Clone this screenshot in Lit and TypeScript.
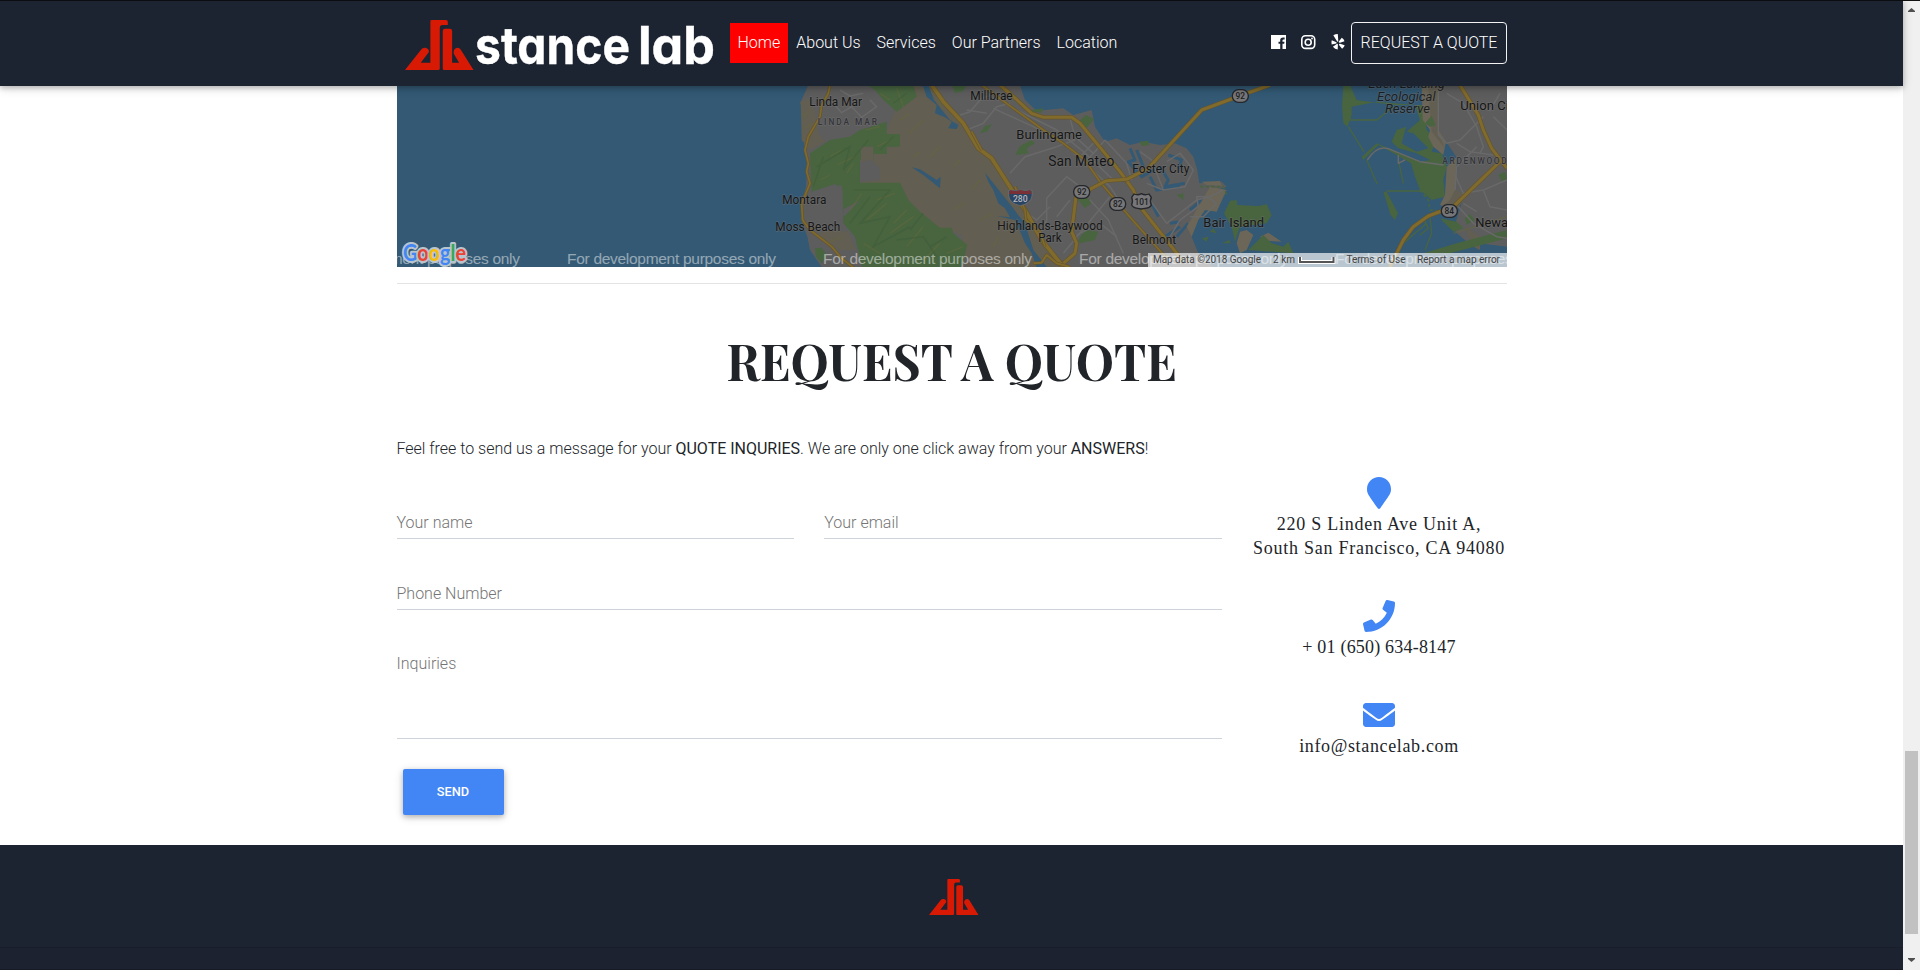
import { LitElement, html, css, svg } from "lit";
import { customElement, property } from "lit/decorators.js";

@customElement("brand-mark")
class BrandMark extends LitElement {
  static styles = css`
    :host { display: block; }
    svg { display: block; width: 100%; height: 100%; }
  `;
  render() {
    return html`<svg viewBox="0 0 205 150" preserveAspectRatio="none" fill="#d81a05">
      <path d="M0 150L48 89Q53 82 61 83Q74 86 71 97L47 128H76V4Q76 0 80 0H123Q128 0 128 5V15H110Q104 16 104 24V146Q104 150 99 150Z"/>
      <path d="M113 33Q113 26 120 26H134Q141 26 141 33V128H162L146 101Q144 87 154 84Q162 82 167 89L205 150H117Q113 150 113 146Z"/>
    </svg>`;
  }
}

@customElement("area-map")
class AreaMap extends LitElement {
  static styles = css`
    :host { display: block; height: 181px; }
    svg { display: block; width: 1110px; height: 181px; font-family: Roboto, "Open Sans", sans-serif; font-weight: 400; }
    .water { fill: #335974; }
    .land { fill: #5d5d5d; }
    .hill { fill: #625e51; }
    .green { fill: #486540; }
    .sand { fill: #6b6657; }
    .casing { fill: none; stroke: #65552d; stroke-linejoin: round; }
    .road { fill: none; stroke: #806a2c; stroke-linejoin: round; }
    .street { fill: none; stroke: #69696a; stroke-width: 4.500; stroke-linejoin: round; }
    .inlet { fill: none; stroke: #335974; stroke-linejoin: round; }
    .marsh { fill: none; stroke: #486540; }
    .hatch { fill: none; stroke: #66673c; stroke-width: 4; opacity: .55; }
    .shade { fill: none; stroke: #3e5b38; stroke-width: 5; opacity: .45; }
    .label { fill: #161616; stroke: #747474; stroke-width: 4; paint-order: stroke; stroke-opacity: .5; }
    .area { fill: #34353b; font-weight: 500; }
    .shield { fill: #77777a; stroke: #25272c; stroke-width: 4; }
    .num { fill: #1d1e20; font-size: 25px; text-anchor: middle; font-weight: 500; }
    .mark { fill: #fff; opacity: .47; font-family: "Liberation Sans", sans-serif; }
    .bar { fill: #fff; opacity: .66; }
    .legal { fill: #444; }
    .google { font-family: Lato, sans-serif; font-weight: 700; }
  `;
  label(x: number, y: number, w: number, t: string, size = 38) {
    return svg`<text class="label" x=${x} y=${y} font-size=${size} textLength=${w} lengthAdjust="spacingAndGlyphs">${t}</text>`;
  }
  way(d: string, w = 11) {
    return svg`<path class="casing" stroke-width=${w + 4} d=${d}/><path class="road" stroke-width=${w} d=${d}/>`;
  }
  shield(x: number, y: number, t: string) {
    return svg`<rect class="shield" x=${x - 24} y=${y - 19} width="48" height="38" rx="18"/><text class="num" x=${x} y=${y + 9}>${t}</text>`;
  }
  render() {
    const streets = [
      "M150 60L185 98L215 80L245 112L290 80L270 60", "M180 30L210 48L250 40",
      "M540 105L570 95L605 55L650 40", "M560 150L610 130L650 80L690 70", "M640 85L760 140L850 190L990 320L1070 440",
      "M680 75L830 150L910 215L1000 300", "M870 115L885 170L940 220L975 180", "M690 280L735 230L830 200L885 180",
      "M975 180L1040 250L1055 300", "M800 355L860 290L900 320", "M800 355V420L780 460", "M850 520L990 350",
      "M830 410L870 360", "M930 360L985 420L1030 520", "M890 465L960 430L1010 470", "M740 400L770 420L810 380",
      "M560 90L620 100", "M900 230L945 185", "M915 245L960 200"
    ];
    const east = [
      "M925 30V165L950 190L990 180L1060 110", "M950 40L1000 70L1040 140L1060 200L1050 220", "M980 190L1020 215L1090 225",
      "M975 285L1000 340L1060 330L1131 300", "M1060 330L1080 380L1131 390", "M1000 370L1040 395", "M1090 110L1131 150",
      "M1040 200L980 260L975 330", "M1110 40L1080 90L1040 75", "M985 380L1030 430L1100 470L1131 475",
      "M30 215L65 240L100 330L165 320L190 270L150 220L110 245", "M60 360L110 430L200 360L240 350L280 330",
      "M100 330L50 310", "M120 470L150 420L205 380L200 350L230 350L260 370L220 410L180 410"
    ];
    return html`<svg viewBox="397 86 1110 181">
      <rect class="water" x="397" y="86" width="1110" height="181"/>
      <g transform="translate(780 80) scale(.33333)">
        <path class="land" d="M85 15L60 70L70 85V175L82 250L78 320L64 370L65 425L82 470L90 510L125 561H1300L1255 520L1235 470L1262 400L1310 330L1340 320L1325 305L1258 310L1252 270L1240 230L1220 205L1185 190L1140 195L1090 185L1050 195L1010 175L975 185L945 140L935 90L880 105L850 85L770 92L735 60L720 15Z"/>
        <path class="hill" d="M400 15H455L500 85L560 140L610 220L700 320L740 400L800 500L850 550L840 561H560L545 465L470 440L390 370L360 310H240V240L180 190L240 160L320 150L345 95Z"/>
        <path class="hill" d="M62 65L85 55L105 95L115 160L135 185L90 210L65 180ZM140 450L205 455L225 510L180 510L110 465Z"/>
        <path class="green" d="M262 15H400L410 50L350 95L310 60L285 30ZM90 220L150 180L210 170L240 150L320 125V162H360V200H320V222H280V240H240V308H360L385 360L420 395L480 443H515L520 460L562 495L545 561H245L225 470L190 430L185 315L95 335ZM515 15H560L548 35L525 38Z"/>
        <path class="hill" d="M243 200H280V240H243Z"/>
        <path class="land" d="M240 245L275 240L300 265V300L240 306ZM95 335L165 312L188 330V420L130 440L78 400ZM190 388L238 362L190 412Z"/>
        <path class="green" d="M600 160L615 138L636 133L620 155ZM706 225L720 198L755 180L765 190L740 205L745 220ZM740 92L790 85L785 98ZM895 125L918 105L942 118L920 143L900 140ZM890 355L920 350L935 368L915 385ZM895 480L915 450L955 455L945 480L900 490ZM105 505L125 503L140 525L125 550L108 530ZM1078 185L1105 182L1108 195L1085 198Z"/>
        <path class="water" d="M405 15H445L462 60L490 95L510 120L535 135L530 147L505 145L515 125L495 112L465 100L470 75L440 50L430 20ZM395 262L420 268L470 300L482 290L480 325L430 285ZM615 278L700 385L712 402L735 430L760 510L800 561H770L755 520L735 490L725 465L705 420L650 408L690 412L675 385L655 370L640 330L625 305Z"/>
        ${["M150 230L185 210M170 255L225 230M120 300L150 285M200 280L220 250M255 150L300 140M290 200L330 180M300 40L330 60M350 25L370 80", "M210 390L245 340M260 420L320 370M290 360L345 340M330 460L400 410M380 500L430 440M250 490L300 520M430 540L480 490M500 520L550 500M380 390L340 430", "M70 110L85 95M75 145L100 130M140 490L185 470M360 120L390 100M385 160L430 120M450 230L480 200M520 260L540 240M575 330L600 300M600 420L640 400M640 500L655 470M400 230L420 215M520 390L550 370M490 90L475 60"].map(d => svg`<path class="hatch" d=${d}/>`)}
        <path class="shade" d="M110 260L210 200L190 270L265 180M220 330L330 330L240 430L330 410L280 500L390 440M350 480L430 470L470 530M130 230L100 320M340 170L300 210M380 40L340 70M430 400L390 450M500 470L450 500M270 350L210 430"/>
        ${streets.map(d => svg`<path class="street" d=${d}/>`)}
        <path class="inlet" stroke-width="9" d="M1050 205L1065 240L1045 245L1085 290L1130 265M1070 210L1090 260M1165 225L1205 240L1195 265M1110 290L1130 330L1200 320M1140 260L1165 300L1155 320L1215 310M1170 430L1200 425M1155 470L1200 440M1230 390L1270 355M1190 470L1225 430M1115 370L1135 410"/>
      </g>
      <g transform="translate(1130 80) scale(.33333)">
        <path class="green" d="M640 15H660L680 60L790 75H880L890 150L918 180L905 215L935 220L950 260L940 300L945 350L905 360L870 330L855 290L843 250L800 225L745 195L700 240L695 230L740 190L800 215L870 245L900 240L860 220L805 205L785 185L800 150L828 140L815 190L860 215L895 205L850 160L830 155L870 120L855 75L740 65L665 80V105L652 140L640 130L636 78ZM760 335L770 335L804 400L795 420L782 405ZM282 400L300 362L320 360L322 375L385 378L410 373L425 405L410 430L330 440L315 485L305 440Z"/>
        <path class="sand" d="M875 15H920L925 120L950 175L940 225L910 200L895 170L900 150L878 120ZM950 260L980 230V330L1000 345L970 390L930 375L945 345ZM215 305L270 303L275 318L230 315ZM240 320L290 330L260 395L225 390L205 420L185 470L170 440L205 380ZM390 470L415 458L455 485L410 482ZM330 455L350 450L370 465L350 510L330 520L320 490Z"/>
        <path class="land" d="M915 15H1131V500L1010 485L970 450L1000 350L975 330L985 240L955 195L925 150Z"/>
        <path class="hill" d="M895 25L935 15L925 60V160L945 205L905 155ZM975 330L1010 345L980 390L935 380L960 360ZM1005 440L1050 470V510L1030 500Z"/>
        <path class="green" d="M885 130L905 107L917 135L900 140ZM1005 415L1020 402L1034 420L1010 435ZM140 345L160 340V360ZM240 455L250 445L260 460ZM215 475L235 470L230 485ZM275 490L300 480V490ZM355 510L400 465L425 490L460 500L475 485L490 520ZM1105 285L1125 275L1131 300L1115 303ZM930 415L980 425L1000 445L970 455ZM880 520L980 490L1131 450V475L960 520Z"/>
        <path class="marsh" stroke-width="4" d="M660 80V120H740L790 80M655 140L702 215M710 240L742 313M805 240L820 310M770 333H880M880 415L895 445L870 465M900 410L905 460L885 510M820 490L890 430"/>
        <path class="marsh" stroke-width="5" stroke-dasharray="10 7" d="M210 320H280L290 345M870 330L895 360L900 390L950 395"/>
        <path class="hatch" d="M970 460L1131 410"/>
        <path class="street" stroke-width="8" d="M712 240Q740 195 775 206L870 245L940 255M805 225V250L825 240"/>
        ${east.map(d => svg`<path class="street" d=${d}/>`)}
      </g>
      <g transform="translate(780 80) scale(.33333)">
        ${this.way("M150 15L145 40L125 75L120 110L85 170L75 210L85 250L80 275L90 310L65 370L68 420L90 450L155 500L185 535L230 570", 5)}
        ${this.way("M605 15L700 85L790 150L850 190L915 240L960 305L1040 400L1160 535", 5)}
        ${this.way("M660 15L695 45L755 100L790 112H875L900 130L950 190L1020 275L1060 330L1080 380L1135 450L1210 545", 9)}
        ${this.way("M455 15L490 65L550 130L595 205L635 235L680 305L735 390L785 480L850 561", 11)}
        ${this.way("M575 155L605 210M705 320L735 390L738 420L780 455L795 500", 5)}
        ${this.way("M850 550L885 520L890 490L875 455L888 350L935 325L980 302L1040 298L1105 265L1265 90L1400 40L1470 15", 9)}
        ${this.way("M760 550L785 548L800 525L830 550L870 561", 6)}
      </g>
      <g transform="translate(1130 80) scale(.33333)">
        ${this.way("M990 15L1045 105L1060 150L1085 205L1131 265", 9)}
        ${this.way("M1110 245L970 380L895 408L850 440L820 480L795 530L780 561", 9)}
      </g>
      <g transform="translate(780 80) scale(.33333)">
        ${this.label(88, 79, 158, "Linda Mar")}
        <text class="label area" x="113" y="134" font-size="25" textLength="178">LINDA MAR</text>
        ${this.label(571, 60, 127, "Millbrae")}
        ${this.label(709, 176, 197, "Burlingame")}
        ${this.label(805, 258, 198, "San Mateo", 42)}
        ${this.label(1057, 279, 171, "Foster City")}
        ${this.label(7, 372, 132, "Montara")}
        ${this.label(-14, 453, 195, "Moss Beach")}
        ${this.label(652, 449, 316, "Highlands-Baywood")}
        ${this.label(775, 485, 70, "Park")}
        ${this.label(1057, 491, 131, "Belmont")}
        ${this.label(1270, 440, 182, "Bair Island", 40)}
        <path fill="#2a4463" stroke="#777" stroke-width="2" d="M686 331H756V348Q752 371 721 377Q690 371 686 348Z"/>
        <path fill="#7b3035" d="M687 342L691 330L706 334L721 330L736 334L751 330L755 342Z"/>
        <text x="721" y="366" fill="#b5b7bb" font-size="26" font-weight="500" text-anchor="middle">280</text>
        ${this.shield(905, 336, "92")}
        ${this.shield(1013, 372, "82")}
        <path class="shield" d="M1062 342Q1073 347 1084 341Q1095 347 1107 342L1114 352Q1108 364 1114 376Q1107 385 1095 385L1084 387L1073 385Q1057 383 1055 374Q1060 364 1055 352Z"/>
        <text class="num" x="1085" y="375">101</text>
      </g>
      <g transform="translate(1130 80) scale(.33333)">
        ${this.shield(331, 48, "92")}
        ${this.shield(958, 393, "84")}
        <g font-style="italic" opacity=".85">
          ${this.label(715, 23, 230, "Eden Landing", 36)}
          ${this.label(741, 62, 176, "Ecological", 36)}
          ${this.label(765, 100, 135, "Reserve", 36)}
        </g>
        ${this.label(991, 90, 177, "Union City")}
        <text class="label area" x="937" y="251" font-size="25" textLength="193">ARDENWOOD</text>
        ${this.label(1036, 442, 131, "Newark")}
      </g>
      <g class="mark" font-size="15.5">
        <text x="311" y="264" textLength="209">For development purposes only</text>
        <text x="567" y="264" textLength="209">For development purposes only</text>
        <text x="823" y="264" textLength="209">For development purposes only</text>
        <text x="1079" y="264" textLength="209">For development purposes only</text>
        <text x="1335" y="264" textLength="209">For development purposes only</text>
      </g>
      <text class="google" x="403" y="261" font-size="22" textLength="63" lengthAdjust="spacingAndGlyphs" stroke="#b9c5ce" stroke-width="4" stroke-linejoin="round" paint-order="stroke"><tspan fill="#4285f4">G</tspan><tspan fill="#ea4335">o</tspan><tspan fill="#fbbc05">o</tspan><tspan fill="#4285f4">g</tspan><tspan fill="#34a853">l</tspan><tspan fill="#ea4335">e</tspan></text>
      <rect class="bar" x="1148" y="253" width="359" height="14"/>
      <g class="legal" font-size="10">
        <text x="1153" y="263" textLength="108">Map data ©2018 Google</text>
        <text x="1273" y="263" textLength="22">2 km</text>
        <text x="1346.500" y="263" textLength="59">Terms of Use</text>
        <text x="1417" y="263" textLength="83">Report a map error</text>
      </g>
      <path d="M1300 257V262H1333.500V257" fill="none" stroke="#fff" stroke-width="4"/>
      <path d="M1300 257V262H1333.500V257" fill="none" stroke="#555" stroke-width="2"/>
    </svg>`;
  }
}

@customElement("site-header")
class SiteHeader extends LitElement {
  static styles = css`
    :host { display: block; position: relative; z-index: 2; height: 85px; border-top: 1px solid #0c0d10; background: #1d2431; box-shadow: 0 2px 5px rgba(0,0,0,.2), 0 2px 10px rgba(0,0,0,.16); font: 300 16px/24px Roboto, sans-serif; color: #fff; }
    .inner { display: flex; align-items: center; width: 1110px; height: 80px; margin: 0 auto; }
    .brand { display: flex; width: 325px; height: 80px; margin-left: 8.500px; }
    .mark { width: 68.500px; height: 50px; margin-top: 19px; }
    .word { display: block; width: 245px; height: 60px; margin-top: 13px; overflow: visible; }
    .word text { font: 700 52px Inter, sans-serif; font-feature-settings: "cv11" 1; fill: #fff; stroke: #fff; stroke-width: .4px; }
    nav { display: flex; }
    .link { padding: 8px; color: #fff; text-decoration: none; white-space: nowrap; }
    .on { background: #f00; margin-left: -0.500px; }
    .social { display: flex; align-items: center; gap: 14px; margin-left: auto; margin-right: 5px; padding-bottom: 1px; }
    .social svg { display: block; width: 16px; height: 16px; }
    .quote { box-sizing: border-box; width: 156px; height: 42px; border: 1px solid #f2f2f2; border-radius: 4px; text-align: center; line-height: 39px; white-space: nowrap; margin-top: 3px; padding-left: 1px; }
    nav, .social { margin-top: 3px; }
  `;
  render() {
    return html`<div class="inner">
      <div class="brand">
        <brand-mark class="mark"></brand-mark>
        <svg class="word" viewBox="0 0 245 60"><text x="1" y="49.500" textLength="155" lengthAdjust="spacingAndGlyphs">stance</text><text x="164" y="49.500" textLength="77" lengthAdjust="spacingAndGlyphs">lab</text></svg>
      </div>
      <nav>
        <a class="link on">Home</a><a class="link">About Us</a><a class="link">Services</a><a class="link">Our Partners</a><a class="link">Location</a>
      </nav>
      <div class="social">
        <svg viewBox="0 0 16 16"><path fill="#fff" d="M1 1H16V15H12.500V9.800H14.200L14.500 7.700H12.500V6.500Q12.500 5.500 13.600 5.500H14.600V3.600Q10.200 2.900 10.200 6V7.700H8.500V9.800H10.200V15H1Z"/></svg>
        <svg viewBox="0 0 16 16" fill="none" stroke="#fff"><rect x="1.800" y="1.800" width="12.900" height="12.600" rx="3.600" stroke-width="1.600"/><circle cx="8.200" cy="8.200" r="3" stroke-width="1.600"/><circle cx="12" cy="4.500" r=".9" fill="#fff" stroke="none"/></svg>
        <svg viewBox="0 0 16 16" fill="#fff"><path d="M3.300 1.200Q5.500 0 7.800 0L8.300 7.200Q7.800 8.200 7 7.300ZM1.800 6.200L6.400 8.200Q7 8.900 6.300 9.400L1.700 10.500Q1 8.200 1.800 6.200ZM2.900 12.800L6.800 9.900Q7.800 9.700 7.900 10.500L7.700 15.500Q5 15.200 2.900 12.800ZM9 10.300Q9.200 9.400 10.100 9.700L14.700 11.300Q14 13.600 12.100 14.800L9.200 11.200ZM9.100 8.500Q8.600 8 9 7.300L11.800 3.700Q13.900 5 14.500 7.300L10 8.700Z"/></svg>
      </div>
      <div class="quote">REQUEST A QUOTE</div>
    </div>`;
  }
}

@customElement("text-field")
class TextField extends LitElement {
  @property() label = "";
  static styles = css`
    :host { display: block; box-sizing: border-box; padding-top: 1px; border-bottom: 1px solid #ced4da; font: 300 16px/24px Roboto, sans-serif; color: #757575; }
  `;
  render() { return html`${this.label}`; }
}

@customElement("quote-form")
class QuoteForm extends LitElement {
  static styles = css`
    :host { display: block; width: 825.500px; font-family: Roboto, sans-serif; }
    .pair { display: grid; grid-template-columns: 1fr 1fr; gap: 30px; padding-top: 33px; }
    .field { height: 29px; }
    .phone { margin-top: 42px; }
    .area { margin-top: 41px; height: 88px; }
    .send { display: block; width: 101px; height: 46px; margin: 30px 0 0 6px; padding: 0 0 2px; border: 0; border-radius: 2px; background: #4285f4; color: #fff; font: 500 12.800px Roboto, sans-serif; box-shadow: 0 2px 5px rgba(0,0,0,.2), 0 2px 10px rgba(0,0,0,.16); }
  `;
  render() {
    return html`
      <div class="pair"><text-field class="field" label="Your name"></text-field><text-field class="field" label="Your email"></text-field></div>
      <text-field class="field phone" label="Phone Number"></text-field>
      <text-field class="area" label="Inquiries"></text-field>
      <button class="send">SEND</button>`;
  }
}

@customElement("contact-list")
class ContactList extends LitElement {
  static styles = css`
    :host { display: flex; flex-direction: column; width: 255px; color: #212529; font: 18px/24px "Liberation Serif", serif; text-align: center; white-space: nowrap; }
    svg { display: block; height: 32px; margin: 0 auto; fill: #4285f4; }
    .item { margin-bottom: 40px; }
    .one { letter-spacing: .74px; }
    .two { letter-spacing: .2px; }
    .mail { letter-spacing: .65px; }
    .item p { margin: 3px 0 0; }
  `;
  render() {
    return html`
      <div class="item"><svg viewBox="0 0 384 512"><path d="M172.268 501.670C26.970 291.031 0 269.413 0 192 0 85.961 85.961 0 192 0s192 85.961 192 192c0 77.413-26.970 99.031-172.268 309.670-9.535 13.774-29.930 13.773-39.464 0z"/></svg>
        <p class="one">220 S Linden Ave Unit A,<br>South San Francisco, CA 94080</p></div>
      <div class="item"><svg viewBox="0 0 512 512"><path d="M493.400 24.600l-104-24c-11.300-2.600-22.900 3.300-27.500 13.900l-48 112c-4.200 9.800-1.400 21.300 6.900 28l60.600 49.600c-36 76.700-98.900 140.500-177.200 177.200l-49.600-60.600c-6.800-8.300-18.200-11.100-28-6.900l-112 48C3.900 366.500-2 378.100.6 389.400l24 104C27.100 504.200 36.700 512 48 512c256.100 0 464-207.500 464-464 0-11.200-7.700-20.900-18.600-23.400z"/></svg>
        <p class="two">+ 01 (650) 634-8147</p></div>
      <div class="item"><svg viewBox="0 0 512 512"><path d="M502.300 190.800c3.900-3.100 9.700-.2 9.700 4.700V400c0 26.500-21.500 48-48 48H48c-26.500 0-48-21.500-48-48V195.600c0-5 5.700-7.800 9.700-4.700 22.400 17.400 52.100 39.500 154.100 113.600 21.100 15.400 56.700 47.800 92.200 47.600 35.700.3 72-32.800 92.300-47.600 102-74.100 131.600-96.300 154-113.700zM256 320c23.200.4 56.600-29.200 73.400-41.400 132.700-96.300 142.800-104.700 173.400-128.700 5.800-4.500 9.200-11.500 9.200-18.900v-19c0-26.500-21.500-48-48-48H48c-26.500 0-48 21.500-48 48v19c0 7.400 3.400 14.300 9.200 18.900 30.600 23.900 40.700 32.400 173.400 128.700 16.800 12.200 50.200 41.800 73.400 41.400z"/></svg>
        <p class="mail">info@stancelab.com</p></div>`;
  }
}

@customElement("app-root")
class AppRoot extends LitElement {
  static styles = css`
    :host { display: flex; width: 1920px; height: 970px; overflow: hidden; background: #fff; font: 300 16px/24px Roboto, sans-serif; color: #212529; }
    .page { width: 1903px; display: flex; flex-direction: column; }
    main { width: 1110px; height: 759px; margin: 0 auto; }
    .rule { height: 1px; margin-top: 16px; background: #e3e3e3; }
    .title { display: block; width: 450px; height: 60px; margin: 51px auto 0; overflow: visible; }
    .title text { font: 700 50px "Playfair Display", "Liberation Serif", serif; fill: #212529; }
    .lead { margin: 42px 0 0; height: 24px; letter-spacing: -.01px; }
    .lead b { font-weight: 400; }
    .row { display: flex; justify-content: space-between; padding-top: 16px; }
    footer { display: flex; flex-direction: column; height: 125px; background: #1d2431; }
    .top { box-sizing: border-box; height: 102px; padding-top: 34px; }
    .mark { width: 49.500px; height: 36px; margin: 0 auto; padding-left: 5px; }
    .copy { flex: 1; border-top: 1px solid #191e2a; background: #1c222f; border-bottom: 1px solid #151a24; }
    .scroll { display: flex; flex-direction: column; align-items: center; width: 17px; background: #f0f0f0; box-sizing: border-box; border-top: 1px solid #111; }
    .scroll svg { display: block; width: 7px; height: 4px; margin-top: 7px; }
    .thumb { width: 13px; height: 183px; margin-top: 739px; background: #c1c1c1; }
    .scroll .down { margin-top: 24px; }
  `;
  render() {
    return html`
      <div class="page">
        <site-header></site-header>
        <main>
          <area-map></area-map>
          <div class="rule"></div>
          <svg class="title" viewBox="0 0 450 60"><text x="-0.500" y="45.500" textLength="450.500" lengthAdjust="spacingAndGlyphs">REQUEST A QUOTE</text></svg>
          <p class="lead">Feel free to send us a message for your <b>QUOTE INQURIES</b>. We are only one click away from your <b>ANSWERS</b>!</p>
          <div class="row">
            <quote-form></quote-form>
            <contact-list></contact-list>
          </div>
        </main>
        <footer><div class="top"><brand-mark class="mark"></brand-mark></div><div class="copy"></div></footer>
      </div>
      <div class="scroll">
        <svg viewBox="0 0 7 4"><path fill="#505050" d="M0 4V3L3.500 0L7 3V4Z"/></svg>
        <div class="thumb"></div>
        <svg class="down" viewBox="0 0 7 4"><path fill="#505050" d="M0 0V1L3.500 4L7 1V0Z"/></svg>
      </div>`;
  }
}
